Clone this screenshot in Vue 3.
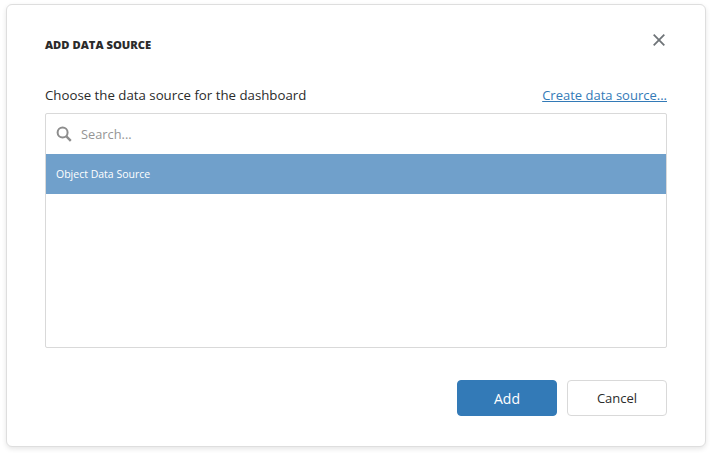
<template>
  <div class="page">
    <div class="dialog">
      <div class="head">
        <h2>Add data source</h2>
        <button class="close" aria-label="Close">
          <svg viewBox="0 0 12 12" width="12" height="12" aria-hidden="true">
            <path d="M.7.7l10.6 10.6M11.3.7L.7 11.3" fill="none" stroke="#6f7478" stroke-width="1.8" />
          </svg>
        </button>
      </div>

      <div class="label-row">
        <span class="label">Choose the data source for the dashboard</span>
        <a class="create" href="#">Create data source...</a>
      </div>

      <div class="list-box">
        <div class="search">
          <svg viewBox="0 0 16 16" width="16" height="16" aria-hidden="true">
            <circle cx="6.6" cy="6.6" r="5" fill="none" stroke="#8d8d8d" stroke-width="2" />
            <path d="M10.4 10.4l4.4 4.4" fill="none" stroke="#8d8d8d" stroke-width="2.4" />
          </svg>
          <span class="placeholder">Search...</span>
        </div>
        <div class="item selected" v-for="s in sources" :key="s">{{ s }}</div>
      </div>

      <div class="actions">
        <button class="btn primary">Add</button>
        <button class="btn">Cancel</button>
      </div>
    </div>
  </div>
</template>

<script setup>
const sources = ['Object Data Source']
</script>

<style>
html, body {
  margin: 0;
  background: #fff;
}
</style>

<style scoped>
.page {
  width: 712px;
  height: 455px;
  padding: 4px 6px 0;
  box-sizing: border-box;
  font-family: "Open Sans", "Noto Sans", sans-serif;
  color: #2b2b2b;
}

.dialog {
  width: 700px;
  height: 443px;
  box-sizing: border-box;
  padding: 0 38px;
  background: #fff;
  border: 1px solid #dedede;
  border-radius: 6px;
  box-shadow: 0 2px 5px rgba(0, 0, 0, 0.1);
}

.head {
  height: 79px;
  display: flex;
  justify-content: space-between;
  align-items: flex-start;
}

h2 {
  margin: 34px 0 0;
  font-size: 11.2px;
  line-height: 12px;
  font-weight: 800;
  text-transform: uppercase;
  color: #2b2b2b;
}

.close {
  margin: 29px 2px 0 0;
  padding: 0;
  border: 0;
  background: none;
  width: 13px;
  height: 13px;
}

.label-row {
  height: 29px;
  display: flex;
  justify-content: space-between;
  align-items: flex-start;
  font-size: 13.25px;
  line-height: 23px;
}

.create {
  font-size: 13px;
  color: #337ab7;
  text-decoration: underline;
}

.list-box {
  height: 235px;
  box-sizing: border-box;
  border: 1px solid #d9d9d9;
  border-radius: 2px;
}

.search {
  height: 40px;
  display: flex;
  align-items: center;
  gap: 9px;
  padding-left: 10px;
}

.placeholder {
  font-size: 12.8px;
  color: #959595;
}

.item {
  height: 40px;
  padding-left: 10px;
  display: flex;
  align-items: center;
  font-size: 10.5px;
}

.selected {
  background: #70a0cb;
  color: #fff;
}

.actions {
  margin-top: 32px;
  display: flex;
  justify-content: flex-end;
  gap: 10px;
}

.btn {
  width: 100px;
  height: 36px;
  box-sizing: border-box;
  border: 1px solid #d9d9d9;
  border-radius: 4px;
  background: #fff;
  color: #2b2b2b;
  font-family: inherit;
  font-size: 13px;
  padding: 0;
}

.primary {
  background: #337ab7;
  border-color: #337ab7;
  color: #fff;
  font-size: 14px;
}
</style>
